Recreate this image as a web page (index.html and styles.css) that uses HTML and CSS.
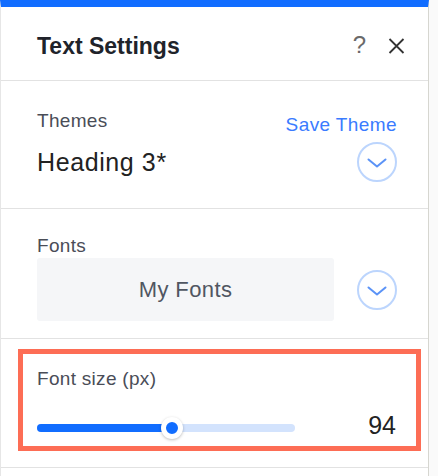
FILE: index.html
```html
<!DOCTYPE html>
<html>
<head>
<meta charset="utf-8">
<link rel="stylesheet" href="styles.css">
</head>
<body>
<div class="page">
  <div class="panel">
    <div class="header">
      <div class="title">Text Settings</div>
      <div class="header-actions">
        <span class="help">?</span>
        <svg class="close" width="17" height="16" viewBox="0 0 17 16"><path d="M1.5 1 L15.5 15 M15.5 1 L1.5 15" stroke="#333" stroke-width="1.8" fill="none"/></svg>
      </div>
    </div>

    <div class="section themes">
      <div class="row top-row">
        <div class="label">Themes</div>
        <div class="link">Save Theme</div>
      </div>
      <div class="row">
        <div class="theme-name">Heading 3*</div>
        <div class="circle-btn">
          <svg width="20" height="10" viewBox="0 0 20 10"><path d="M1.5 1.5 L10 8.5 L18.5 1.5" stroke="#5b93f7" stroke-width="2" fill="none" stroke-linecap="round" stroke-linejoin="round"/></svg>
        </div>
      </div>
    </div>

    <div class="section fonts">
      <div class="label">Fonts</div>
      <div class="row">
        <div class="font-box">My Fonts</div>
        <div class="circle-btn">
          <svg width="20" height="10" viewBox="0 0 20 10"><path d="M1.5 1.5 L10 8.5 L18.5 1.5" stroke="#5b93f7" stroke-width="2" fill="none" stroke-linecap="round" stroke-linejoin="round"/></svg>
        </div>
      </div>
    </div>

    <div class="section size">
      <div class="highlight">
        <div class="label">Font size (px)</div>
        <div class="row slider-row">
          <div class="track">
            <div class="fill" style="width:135px"></div>
            <div class="thumb" style="left:135px"></div>
          </div>
          <div class="value">94</div>
        </div>
      </div>
    </div>
  </div>
</div>
</body>
</html>
```

FILE: styles.css
```css
* { box-sizing: border-box; }
html, body { margin: 0; padding: 0; background: #fafafa; }
body { font-family: "Liberation Sans", Arial, sans-serif; width: 438px; height: 476px; overflow: hidden; }

.page { display: flex; }

.panel {
  width: 429px;
  background: #fff;
  border-top: 7px solid #116dff;
  border-left: 1px solid #e6e6e6;
  border-right: 1px solid #d6d6d0;
  min-height: 476px;
}

.header {
  display: flex;
  justify-content: space-between;
  align-items: flex-start;
  padding: 28px 23px 0 36px;
  height: 74px;
  border-bottom: 1px solid #e2e2e2;
}
.title {
  font-size: 23px;
  line-height: 23px;
  font-weight: bold;
  color: #20232a;
}
.header-actions {
  display: flex;
  align-items: center;
  gap: 22px;
  margin-top: 0;
}
.help {
  font-size: 24px;
  line-height: 24px;
  color: #6a6a6a;
  margin-top: -2px;
}
.close { display: block; }

.section { border-bottom: 1px solid #e2e2e2; }

.row { display: flex; justify-content: space-between; align-items: center; }

.label {
  font-size: 19px;
  line-height: 19px;
  letter-spacing: 0.3px;
  color: #4a4d57;
}

.themes { padding: 30px 31px 0 36px; height: 128px; }
.top-row { align-items: flex-start; margin-bottom: 8px; }
.link {
  font-size: 19px;
  line-height: 19px;
  letter-spacing: 0.4px;
  color: #3a7bff;
  margin-top: 4px;
}
.theme-name {
  font-size: 25px;
  line-height: 25px;
  letter-spacing: 0.6px;
  color: #222;
}

.circle-btn {
  width: 40px;
  height: 40px;
  border-radius: 50%;
  border: 2px solid #bcd5fd;
  display: flex;
  align-items: center;
  justify-content: center;
  padding-top: 2px;
}
.circle-btn svg { display: block; }

.fonts { padding: 27px 31px 0 36px; height: 130px; }
.fonts .label { margin-bottom: 3px; }
.font-box {
  width: 297px;
  height: 63px;
  background: #f5f6f8;
  border-radius: 3px;
  display: flex;
  align-items: center;
  justify-content: center;
  font-size: 22px;
  letter-spacing: 0.4px;
  color: #505662;
}

.size { padding: 10px 7px 0 17px; height: 129px; }
.highlight {
  border: 5px solid #fd6d55;
  padding: 15px 20px 0 14px;
  height: 102px;
}
.slider-row { margin-top: 25px; }
.track {
  position: relative;
  width: 258px;
  height: 8px;
  border-radius: 4px;
  background: #d3e3fd;
  margin-top: 4px;
}
.fill {
  height: 8px;
  border-radius: 4px;
  background: #116dff;
}
.thumb {
  position: absolute;
  top: 50%;
  width: 22px;
  height: 22px;
  margin: -11px 0 0 -11px;
  border-radius: 50%;
  background: #116dff;
  border: 5px solid #fff;
  box-shadow: 0 1px 3px rgba(0,0,0,0.25);
}
.value {
  font-size: 25px;
  line-height: 25px;
  color: #222;
}
```
